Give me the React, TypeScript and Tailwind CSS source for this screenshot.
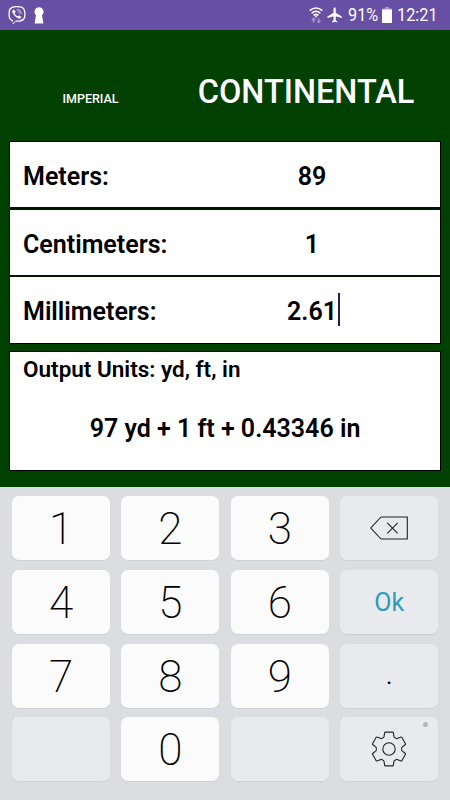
import React from 'react';
import clsx from 'clsx';
import { FaViber } from 'react-icons/fa';
import { MdFlight } from 'react-icons/md';

interface Field {
  label: string;
  value: string;
  focused?: boolean;
}

const fields: Field[] = [
  { label: 'Meters:', value: '89' },
  { label: 'Centimeters:', value: '1' },
  { label: 'Millimeters:', value: '2.61', focused: true },
];

const keys = ['1', '2', '3', 'back', '4', '5', '6', 'ok', '7', '8', '9', '.', '', '0', '', 'settings'];

const KeyholeIcon = () => (
  <svg width="10" height="17" viewBox="0 0 10 17" fill="#fff">
    <path d="M5 0.3a4.6 4.6 0 0 1 3 8L9.4 16.4H0.6L2 8.3A4.6 4.6 0 0 1 5 0.3z" />
  </svg>
);

const WifiIcon = () => (
  <svg width="14" height="17" viewBox="0 0 14 17" fill="none" stroke="#fff" strokeWidth="1.5">
    <path d="M0.6 3.6Q7 -1.6 13.4 3.6" />
    <path d="M2.6 6.2Q7 2.4 11.4 6.2" />
    <path d="M4.6 8.4Q7 6.3 9.4 8.4" />
    <path d="M7 8.6v1.8" />
    <path d="M4.6 16v-4.6M2.8 13.2l1.8-2l1.8 2M9.8 11v4.6M8 13.6l1.8 2l1.8-2" stroke="#a394cb" strokeWidth="1.3" />
  </svg>
);

const BatteryIcon = () => (
  <svg width="10" height="16" viewBox="0 0 10 16">
    <path d="M3 0h4v1.5h3v2H0v-2h3z" fill="#a394cb" />
    <rect y="2.5" width="10" height="13.5" rx="0.6" fill="#fff" />
  </svg>
);

const BackspaceIcon = () => (
  <svg width="38" height="24" viewBox="0 0 38 24" fill="none" stroke="#222" strokeWidth="1.1">
    <path d="M11 1h26.3v22H11L0.8 12z" />
    <path d="M17.3 6.9l10.4 10.4M27.7 6.9L17.3 17.3" />
  </svg>
);

// one tooth, repeated every 60 degrees
const GearIcon = () => (
  <svg width="36" height="36" viewBox="-18 -18 36 36" fill="none" stroke="#222" strokeWidth="1.1">
    {[0, 60, 120, 180, 240, 300].map((a) => (
      <path
        key={a}
        transform={`rotate(${a})`}
        d="M-6.5 -11.3Q-5.3 -11 -5 -12.3L-4.3 -16.4Q-4.2 -16.9 -3.7 -16.9H3.7Q4.2 -16.9 4.3 -16.4L5 -12.3Q5.3 -11 6.5 -11.3"
      />
    ))}
    <circle r="6.2" />
  </svg>
);

const StatusBar = () => (
  <header className="flex h-[30px] items-center bg-[#674fa3] pl-2 text-white">
    <FaViber className="size-[18px]" />
    <div className="ml-2 pt-px">
      <KeyholeIcon />
    </div>
    <div className="ml-auto flex items-center pr-[13px] text-[18.5px] leading-none">
      <WifiIcon />
      <MdFlight className="ml-[3px] size-[18px]" />
      <span className="ml-[4px] w-[31px] origin-left scale-x-[0.88] pt-px whitespace-nowrap">91%</span>
      <div className="ml-[3px]">
        <BatteryIcon />
      </div>
      <span className="ml-[5px] w-[40px] origin-left scale-x-[0.88] pt-px whitespace-nowrap">12:21</span>
    </div>
  </header>
);

const Tabs = () => (
  <nav className="flex h-[111px] text-white">
    <div className="w-[181px] pt-[61px] text-center text-[12.5px] leading-[15px] font-medium">IMPERIAL</div>
    <div className="w-[250px] pt-[42px] text-center text-[32.5px] leading-[40px] font-medium">CONTINENTAL</div>
  </nav>
);

const FieldRow = ({ field }: { field: Field }) => (
  <div className="flex h-[65.3px] items-center bg-white pt-[4px] pl-[13px] text-[25px] font-semibold">
    <span className="w-[183px]">{field.label}</span>
    <span className="flex w-[212px] items-center justify-center">
      {field.value}
      {field.focused && <i className="-mt-[5px] -mr-[3px] ml-px h-[33px] w-[2px] bg-[#2a1850]" />}
    </span>
  </div>
);

const keyContent = (k: string) => {
  if (k === 'back') return <BackspaceIcon />;
  if (k === 'ok') return <span className="pt-px text-[25px] text-[#2d9abb]">Ok</span>;
  if (k === 'settings') return <GearIcon />;
  if (k === '.') return <span className="text-[24px] font-normal">.</span>;
  return <span className="pt-[2px] text-[44px] font-extralight">{k}</span>;
};

const Keypad = () => (
  <div className="grid h-[313px] auto-rows-[64px] grid-cols-[98px_98px_98px_98px] content-start gap-x-[11.4px] gap-y-[9.8px] bg-[#dcdde1] pt-[9px] pl-[12px]">
    {keys.map((k, i) => (
      <button
        key={i}
        className={clsx(
          'relative flex items-center justify-center rounded-[7px] leading-none text-black shadow-[0_1px_0_#d0d1d5]',
          /^\d$/.test(k) ? 'bg-[#fbfbfb]' : 'bg-[#e9eaee]',
        )}
      >
        {keyContent(k)}
        {k === 'settings' && <i className="absolute top-[5px] right-[10px] size-[5px] rounded-full bg-[#b5b5b5]" />}
      </button>
    ))}
  </div>
);

export default function App() {
  return (
    <div className="flex h-[800px] w-[450px] flex-col overflow-hidden bg-[#004000] font-['Roboto',sans-serif] text-black">
      <StatusBar />
      <Tabs />
      <main className="flex h-[346px] flex-col px-[9px]">
        <div className="flex flex-col gap-[2.35px] border border-black bg-[#001800]">
          {fields.map((f) => (
            <FieldRow key={f.label} field={f} />
          ))}
        </div>
        <section className="mt-[7.4px] h-[120px] border border-black bg-white font-semibold">
          <p className="pt-[3px] pl-[13px] text-[22.5px] leading-[28px]">Output Units: yd, ft, in</p>
          <p className="pt-[32px] text-center text-[25px] leading-[28px]">97 yd + 1 ft + 0.43346 in</p>
        </section>
      </main>
      <Keypad />
    </div>
  );
}
